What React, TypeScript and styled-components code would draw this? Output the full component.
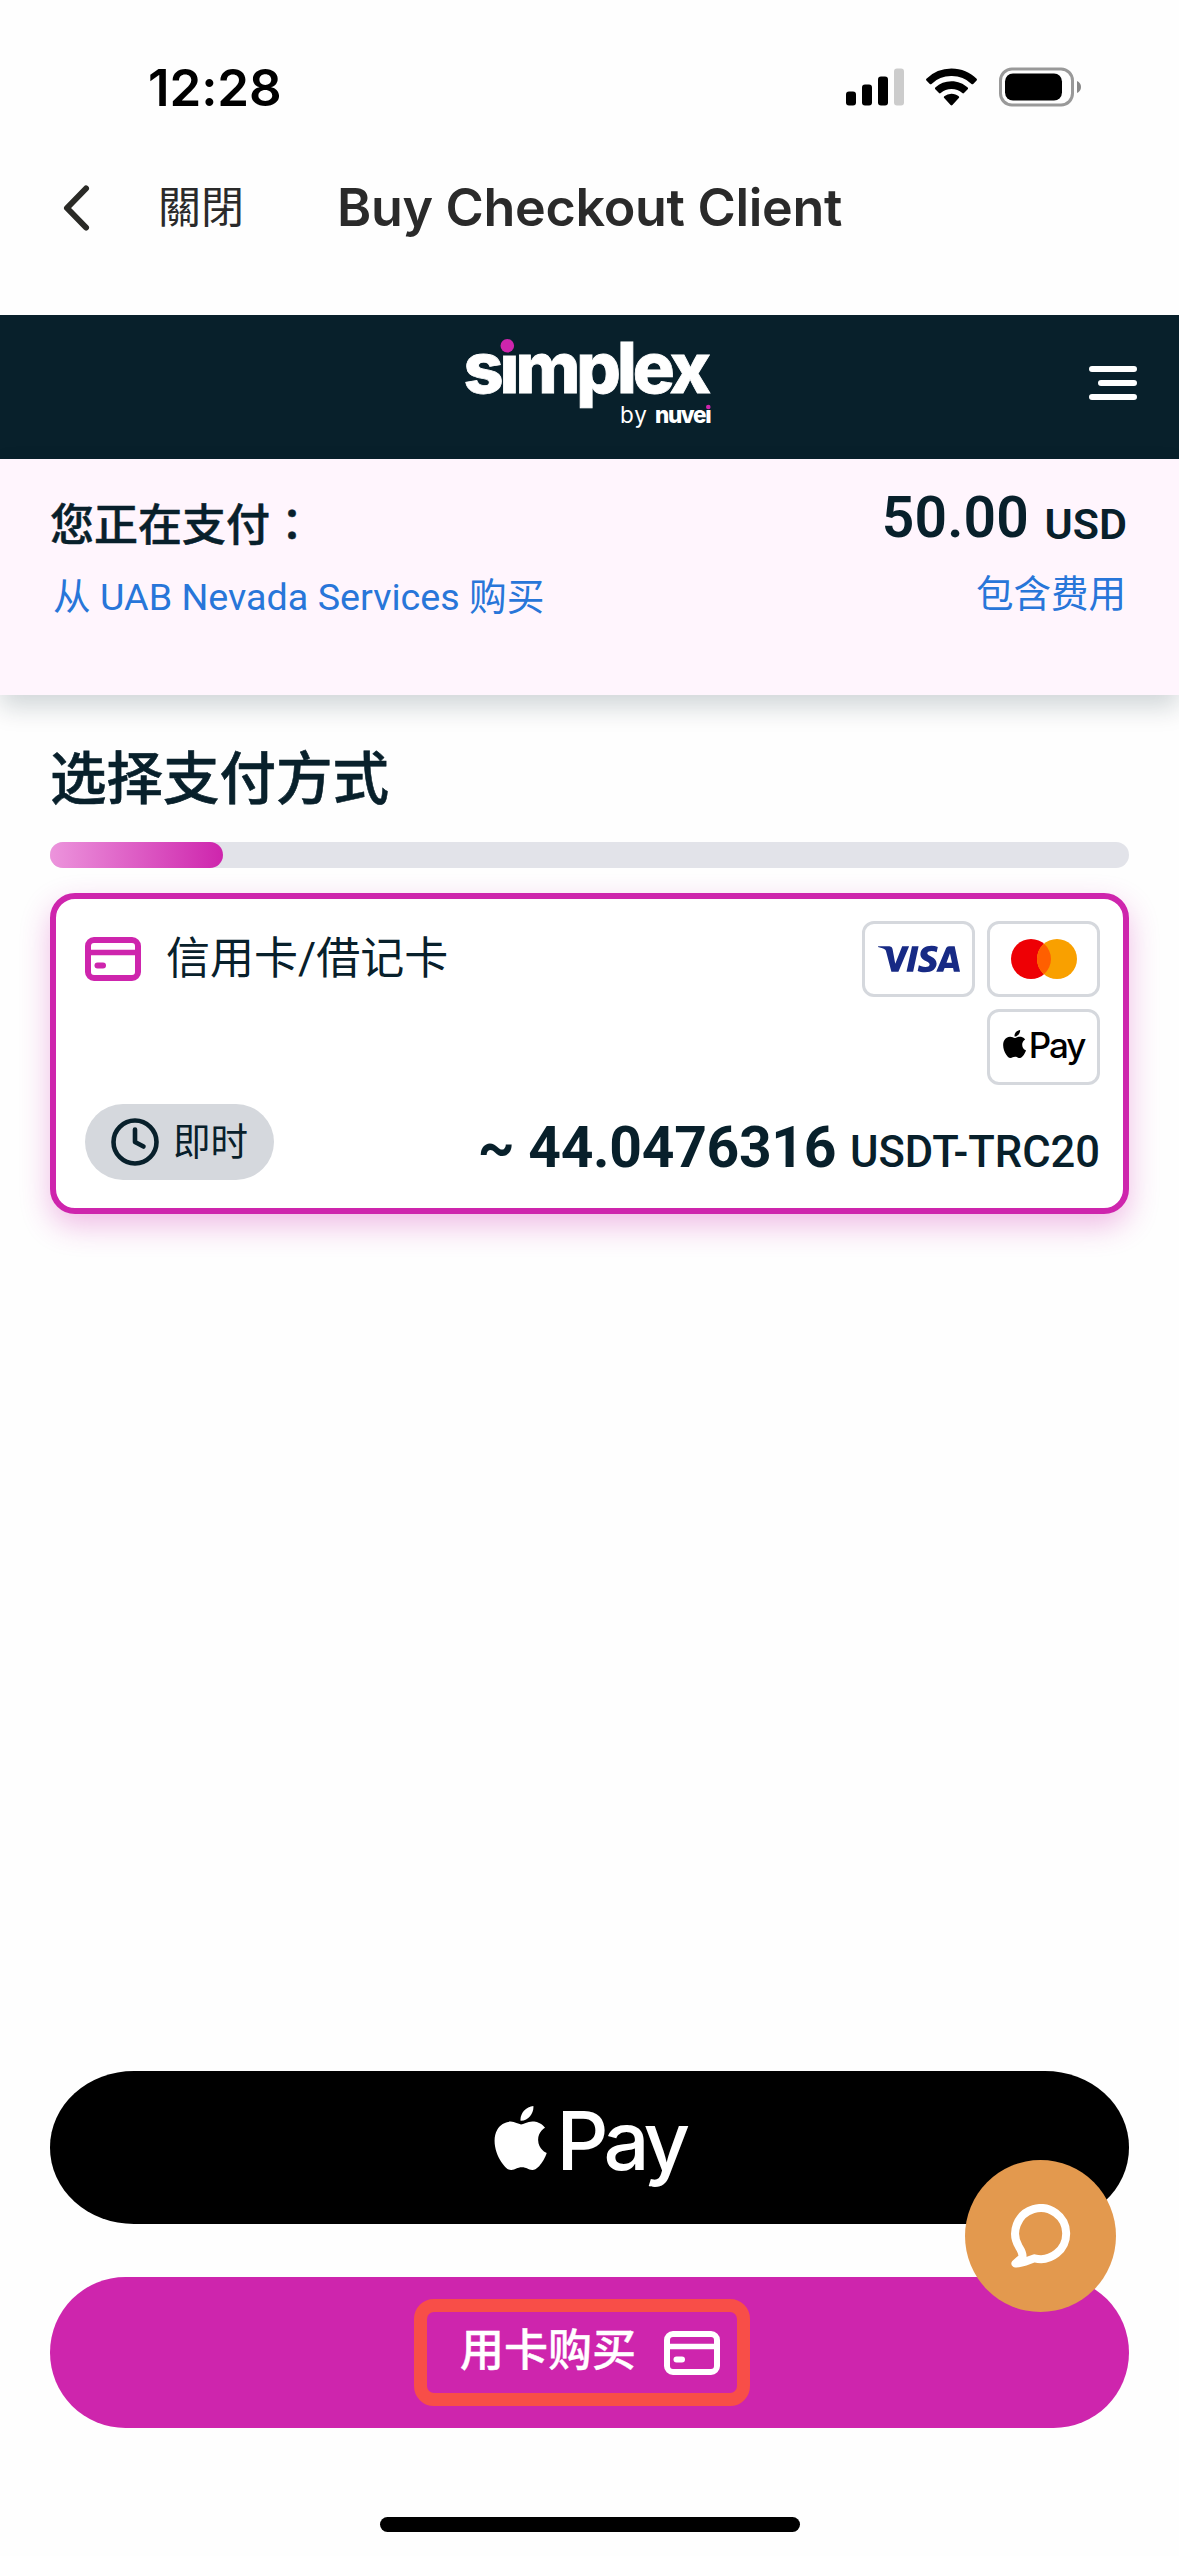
import React from "react";
import styled, { createGlobalStyle } from "styled-components";
import { SiVisa } from "react-icons/si";

const ink = "#08202b";
const magenta = "#ce25ad";
const latin = `Roboto, "Noto Sans CJK SC", sans-serif`;
const system = `Inter, "Noto Sans CJK TC", sans-serif`;

const GlobalStyle = createGlobalStyle`
  *, *::before, *::after { box-sizing: border-box; }
  html, body { margin: 0; padding: 0; background: #fefefe; }
  svg { display: block; flex: none; }
  button { border: 0; padding: 0; background: none; font: inherit; color: inherit; }
`;

const Page = styled.div`
  position: relative;
  display: flex;
  flex-direction: column;
  width: 1179px;
  height: 2556px;
  overflow: hidden;
  background: #fefefe;
  color: ${ink};
  font-family: ${latin};
`;

/* ---------- system chrome ---------- */

const StatusBar = styled.div`
  display: flex;
  align-items: center;
  justify-content: space-between;
  flex: none;
  height: 117px;
  padding: 57px 98px 0 148px;
  color: #000;
`;

const Time = styled.span`
  padding-top: 1px;
  font: 600 51px/60px ${system};
  letter-spacing: -0.1px;
`;

const StatusIcons = styled.div`
  display: flex;
  align-items: center;
`;

const NavBar = styled.div`
  display: grid;
  grid-template-columns: 1fr auto 1fr;
  align-items: center;
  flex: none;
  height: 198px;
  padding: 50px 0 66px;
  color: #2a2a2a;
`;

const NavLeft = styled.div`
  display: flex;
  align-items: center;
  gap: 67px;
  padding-left: 62px;
`;

const CloseLabel = styled.span`
  padding-bottom: 2px;
  font: 400 43px/80px ${system};
`;

const NavTitle = styled.h1`
  margin: 0;
  font: 600 52px/82px ${system};
  letter-spacing: -0.3px;
  white-space: nowrap;
`;

/* ---------- merchant header ---------- */

const BrandBar = styled.header`
  display: grid;
  grid-template-columns: 1fr auto 1fr;
  align-items: center;
  flex: none;
  height: 144px;
  padding: 0 42px;
  background: ${ink};
`;

const MenuButton = styled.button`
  grid-column: 3;
  justify-self: end;
  margin-bottom: 8px;
`;

const LogoSlot = styled.div`
  grid-column: 2;
`;

/* ---------- payment summary ---------- */

const Summary = styled.section`
  position: relative;
  display: flex;
  justify-content: space-between;
  flex: none;
  height: 236px;
  padding: 0 52px 0 50px;
  background: #fff5fd;
  box-shadow: 0 12px 24px rgba(8, 32, 43, 0.18);
`;

const SummaryLeft = styled.div`
  display: flex;
  flex-direction: column;
  gap: 17px;
  padding-top: 37px;
`;

const SummaryRight = styled.div`
  display: flex;
  flex-direction: column;
  align-items: flex-end;
  gap: 20px;
  padding-top: 27px;
`;

const PayingLabel = styled.div`
  font: 500 44px/60px ${latin};
  -webkit-text-stroke: 0.5px currentColor;
`;

const CenteredColon = styled.span`
  font-family: "Noto Sans CJK TC", sans-serif;
  line-height: 1;
`;

const Total = styled.div`
  font: 600 57px/64px ${latin};
  letter-spacing: 0.2px;
  white-space: nowrap;
`;

const TotalCurrency = styled.span`
  margin-left: 1px;
  font-size: 43px;
  line-height: 1;
  vertical-align: -2px;
  letter-spacing: 0;
`;

const InfoLink = styled.a<{ $size: number; $inset?: string }>`
  padding: ${(p) => p.$inset ?? "0"};
  color: #2876d9;
  font: 400 ${(p) => p.$size}px/48px ${latin};
  white-space: nowrap;
`;

/* ---------- payment method ---------- */

const Methods = styled.main`
  display: flex;
  flex-direction: column;
  flex: none;
  padding: 49px 50px 0;
`;

const Heading = styled.h2`
  margin: 0;
  font: 500 56.5px/72px ${latin};
  -webkit-text-stroke: 0.6px currentColor;
`;

const ProgressTrack = styled.div`
  height: 26px;
  margin: 26px 0 25px;
  border-radius: 13px;
  background: #e2e3e9;
`;

const ProgressFill = styled.div`
  width: 173px;
  height: 100%;
  border-radius: 13px;
  background: linear-gradient(90deg, #ec94dc, ${magenta});
`;

const MethodCard = styled.article`
  display: flex;
  flex-direction: column;
  justify-content: space-between;
  height: 321px;
  padding: 22px 23px 28px 29px;
  border: 6px solid ${magenta};
  border-radius: 25px;
  background: #fff;
  box-shadow: 0 12px 30px rgba(206, 37, 173, 0.3);
`;

const MethodTop = styled.div`
  display: flex;
  justify-content: space-between;
  align-items: flex-start;
`;

const MethodName = styled.div`
  display: flex;
  align-items: center;
  gap: 25px;
  margin-top: 8px;
  font: 400 44px/60px ${latin};
`;

const Badges = styled.div`
  display: flex;
  flex-wrap: wrap;
  justify-content: flex-end;
  gap: 12px;
  width: 238px;
`;

const Badge = styled.div`
  display: flex;
  align-items: center;
  justify-content: center;
  width: 113px;
  height: 76px;
  border: 3px solid #d5d8dd;
  border-radius: 12px;
  background: #fff;
  color: #172a85;
`;

const MethodBottom = styled.div`
  display: flex;
  justify-content: space-between;
  align-items: flex-end;
`;

const SpeedChip = styled.div`
  display: flex;
  align-items: center;
  gap: 14px;
  width: 189px;
  height: 76px;
  padding-left: 26px;
  border-radius: 38px;
  background: #d5d8dd;
  font: 400 37.5px/74px ${latin};
`;

const Estimate = styled.div`
  margin-bottom: 6px;
  font: 700 57px/46px ${latin};
  letter-spacing: -0.3px;
  white-space: nowrap;
`;

const EstimateUnit = styled.span`
  font-size: 43.5px;
  font-weight: 500;
  line-height: 1;
  letter-spacing: 0;
`;

/* ---------- actions ---------- */

const Actions = styled.footer`
  display: flex;
  flex-direction: column;
  gap: 53px;
  margin-top: auto;
  padding: 0 50px;
`;

const ApplePayButton = styled.button`
  display: flex;
  align-items: center;
  justify-content: center;
  height: 153px;
  border-radius: 84px / 76px;
  background: #000;
  color: #fff;
`;

const PayWord = styled.span<{ $size: number }>`
  font: 500 ${(p) => p.$size}px/1 ${system};
  letter-spacing: -0.058em;
`;

const ApplePayMark = styled.span<{ $gap: number; $shift: number }>`
  display: flex;
  align-items: baseline;
  gap: ${(p) => p.$gap}px;
  margin-top: ${(p) => p.$shift}px;
`;

const CardButton = styled.button`
  display: flex;
  align-items: center;
  justify-content: center;
  height: 151px;
  padding-right: 15px;
  border-radius: 76px;
  background: ${magenta};
  color: #fff;
`;

const Highlight = styled.span`
  display: flex;
  align-items: center;
  justify-content: space-between;
  width: 336px;
  height: 107px;
  padding: 0 17px 0 33px;
  border: 13px solid #f84e48;
  border-radius: 20px;
  font: 500 44px/60px ${latin};
`;

const HighlightText = styled.span`
  margin-top: -4px;
  -webkit-text-stroke: 0.4px currentColor;
`;

const ChatButton = styled.button`
  position: absolute;
  right: 63px;
  bottom: 244px;
  display: flex;
  align-items: center;
  justify-content: center;
  width: 151px;
  height: 152px;
  border-radius: 50%;
  background: #e3994e;
`;

const HomeIndicator = styled.div`
  flex: none;
  align-self: center;
  width: 420px;
  height: 15px;
  margin: 89px 0 24px;
  border-radius: 8px;
  background: #000;
`;

/* ---------- drawings ---------- */

const SignalIcon = () => (
  <svg width="58" height="40" viewBox="0 0 58 40">
    <rect x="0" y="24.5" width="10" height="14" rx="3" />
    <rect x="16" y="17.5" width="10" height="21" rx="3" />
    <rect x="32" y="9.5" width="10" height="29" rx="3" />
    <rect x="48" y="1.5" width="10" height="37" rx="3" fill="#ccc" />
  </svg>
);

const StatusGlyph = styled.svg`
  margin-left: 22px;
`;

const WifiIcon = () => (
  <StatusGlyph width="51" height="40" viewBox="0 0 51 40">
    <path d="M25.5 1.5C35.4 1.5 44.3 5.4 50.6 11.7c.5.5.5 1.2 0 1.7l-3.4 3.5c-.5.5-1.2.5-1.7 0A28.5 28.5 0 0 0 25.5 9.1 28.5 28.5 0 0 0 5.5 16.9c-.5.5-1.2.5-1.7 0L.4 13.4c-.5-.5-.5-1.2 0-1.7A35.8 35.8 0 0 1 25.5 1.5z" />
    <path d="M25.5 14.2c6.2 0 12 2.4 16.2 6.4.5.5.5 1.2 0 1.7l-3.7 3.8c-.5.5-1.2.5-1.7 0a16 16 0 0 0-21.6 0c-.5.5-1.2.5-1.7 0l-3.7-3.8c-.5-.5-.5-1.2 0-1.7a23.6 23.6 0 0 1 16.2-6.4z" />
    <path d="M25.5 26.7c2.8 0 5.3 1 7.2 2.6.6.5.6 1.3.1 1.8l-6.4 7c-.5.5-1.3.5-1.8 0l-6.4-7c-.5-.5-.5-1.3.1-1.8a11 11 0 0 1 7.2-2.6z" />
  </StatusGlyph>
);

const BatteryIcon = () => (
  <StatusGlyph width="82" height="40" viewBox="0 0 82 40">
    <rect x="1.5" y="2" width="72" height="36" rx="11.5" fill="none" stroke="#999" strokeWidth="3" />
    <rect x="6" y="6.5" width="57" height="27" rx="8" />
    <path d="M78 14c2.6 1.2 4 3.3 4 6s-1.4 4.8-4 6z" fill="#888" />
  </StatusGlyph>
);

const BackIcon = () => (
  <svg width="29" height="48" viewBox="0 0 29 48" fill="none" stroke="#2a2a26" strokeWidth="6" strokeLinecap="round" strokeLinejoin="round">
    <path d="M24 4.5L5 24l19 19.5" />
  </svg>
);

const SimplexLogo = () => (
  <svg width="249" height="124" viewBox="465 325 249 124" fill="#fff">
    <text x="463.5" y="392.5" fontFamily="Inter, sans-serif" fontWeight="800" fontSize="70" textLength="247.5" lengthAdjust="spacing" stroke="#fff" strokeWidth="0.8">
      simplex
    </text>
    <rect x="497.5" y="336" width="20" height="19.5" fill={ink} />
    <circle cx="507.3" cy="345.7" r="6.8" fill={magenta} />
    <text x="620" y="422.5" fontFamily="Inter, sans-serif" fontSize="22.5" textLength="27" lengthAdjust="spacing">
      by
    </text>
    <text x="655" y="422.5" fontFamily="Inter, sans-serif" fontWeight="800" fontSize="22.5" textLength="56.5" lengthAdjust="spacing">
      nuvei
    </text>
    <rect x="704" y="403" width="9" height="6.7" fill={ink} />
    <circle cx="708.3" cy="407" r="2.3" fill={magenta} />
  </svg>
);

const MenuIcon = () => (
  <svg width="48" height="34" viewBox="0 0 48 34" stroke="#fff" strokeWidth="6" strokeLinecap="round">
    <path d="M3 3h42M12 17h33M3 31h42" />
  </svg>
);

const CreditCardIcon = () => (
  <svg width="56" height="44" viewBox="0 0 56 44" fill="none" stroke="currentColor" strokeWidth="6" strokeLinecap="round">
    <rect x="3" y="3" width="50" height="38" rx="6" />
    <path d="M4 15.5h48" strokeLinecap="butt" strokeWidth="5.5" />
    <path d="M12.5 28.5h5.5" />
  </svg>
);

const ClockIcon = () => (
  <svg width="48" height="48" viewBox="0 0 48 48" fill="none" stroke={ink} strokeWidth="4.6" strokeLinecap="round" strokeLinejoin="round">
    <circle cx="24" cy="24" r="21.5" />
    <path d="M24 11.5V24l8.5 4.5" />
  </svg>
);

const MastercardIcon = () => (
  <svg width="66" height="40" viewBox="0 0 66 40">
    <circle cx="20" cy="20" r="20" fill="#ee0005" />
    <circle cx="46" cy="20" r="20" fill="#f9a000" />
    <path d="M33 4.8a20 20 0 0 1 0 30.4a20 20 0 0 1 0-30.4z" fill="#ff5f00" />
  </svg>
);

const AppleIcon = ({ width, height }: { width: number; height: number }) => (
  <svg width={width} height={height} viewBox="2.1 0 19.7 24" fill="currentColor">
    <path d="M12.152 6.896c-.948 0-2.415-1.078-3.96-1.04-2.04.027-3.91 1.183-4.961 3.014-2.117 3.675-.546 9.103 1.519 12.09 1.013 1.454 2.208 3.09 3.792 3.039 1.52-.065 2.09-.987 3.935-.987 1.831 0 2.35.987 3.96.948 1.637-.026 2.676-1.48 3.676-2.948 1.156-1.688 1.636-3.325 1.662-3.415-.039-.013-3.182-1.221-3.22-4.857-.026-3.04 2.48-4.494 2.597-4.559-1.429-2.09-3.623-2.324-4.39-2.376-2-.156-3.675 1.09-4.61 1.09zM15.53 3.83c.843-1.012 1.4-2.427 1.245-3.83-1.207.052-2.662.805-3.532 1.818-.78.896-1.454 2.338-1.273 3.714 1.338.104 2.715-.688 3.559-1.701" />
  </svg>
);

const ChatIcon = () => (
  <svg width="60" height="64" viewBox="0 0 60 64" fill="none" stroke="#fff" strokeWidth="8" strokeLinecap="round" strokeLinejoin="round">
    <path d="M23.5 54.3A25.5 25.5 0 1 0 8 43C10.5 47 12 49 11.5 53 9 56 6 57.5 4.5 59.5 10 60 17 56.5 23.5 54.3z" />
  </svg>
);

const MagentaSlot = styled.span`
  color: ${magenta};
`;

const BlackMark = styled(ApplePayMark)`
  color: #000;
`;

export default function App() {
  return (
    <Page>
      <GlobalStyle />
      <StatusBar>
        <Time>12:28</Time>
        <StatusIcons>
          <SignalIcon />
          <WifiIcon />
          <BatteryIcon />
        </StatusIcons>
      </StatusBar>
      <NavBar>
        <NavLeft>
          <BackIcon />
          <CloseLabel lang="zh-Hant">關閉</CloseLabel>
        </NavLeft>
        <NavTitle>Buy Checkout Client</NavTitle>
      </NavBar>

      <BrandBar>
        <LogoSlot>
          <SimplexLogo />
        </LogoSlot>
        <MenuButton aria-label="menu">
          <MenuIcon />
        </MenuButton>
      </BrandBar>

      <Summary>
        <SummaryLeft>
          <PayingLabel>
            您正在支付<CenteredColon lang="zh-Hant">：</CenteredColon>
          </PayingLabel>
          <InfoLink $size={37.7} $inset="0 0 0 3px">从 UAB Nevada Services 购买</InfoLink>
        </SummaryLeft>
        <SummaryRight>
          <Total>
            50.00 <TotalCurrency>USD</TotalCurrency>
          </Total>
          <InfoLink $size={37.5} $inset="0 1px 0 0">包含费用</InfoLink>
        </SummaryRight>
      </Summary>

      <Methods>
        <Heading>选择支付方式</Heading>
        <ProgressTrack>
          <ProgressFill />
        </ProgressTrack>
        <MethodCard>
          <MethodTop>
            <MethodName>
              <MagentaSlot>
                <CreditCardIcon />
              </MagentaSlot>
              信用卡/借记卡
            </MethodName>
            <Badges>
              <Badge>
                <SiVisa size={82} />
              </Badge>
              <Badge>
                <MastercardIcon />
              </Badge>
              <Badge>
                <BlackMark $gap={3} $shift={-4}>
                  <AppleIcon width={23} height={28} />
                  <PayWord $size={35}>Pay</PayWord>
                </BlackMark>
              </Badge>
            </Badges>
          </MethodTop>
          <MethodBottom>
            <SpeedChip>
              <ClockIcon />
              即时
            </SpeedChip>
            <Estimate>
              ~ 44.0476316 <EstimateUnit>USDT-TRC20</EstimateUnit>
            </Estimate>
          </MethodBottom>
        </MethodCard>
      </Methods>

      <Actions>
        <ApplePayButton>
          <ApplePayMark $gap={10} $shift={-12}>
            <AppleIcon width={53} height={64} />
            <PayWord $size={81}>Pay</PayWord>
          </ApplePayMark>
        </ApplePayButton>
        <CardButton>
          <Highlight>
            <HighlightText>用卡购买</HighlightText>
            <CreditCardIcon />
          </Highlight>
        </CardButton>
      </Actions>
      <HomeIndicator />
      <ChatButton aria-label="chat">
        <ChatIcon />
      </ChatButton>
    </Page>
  );
}
